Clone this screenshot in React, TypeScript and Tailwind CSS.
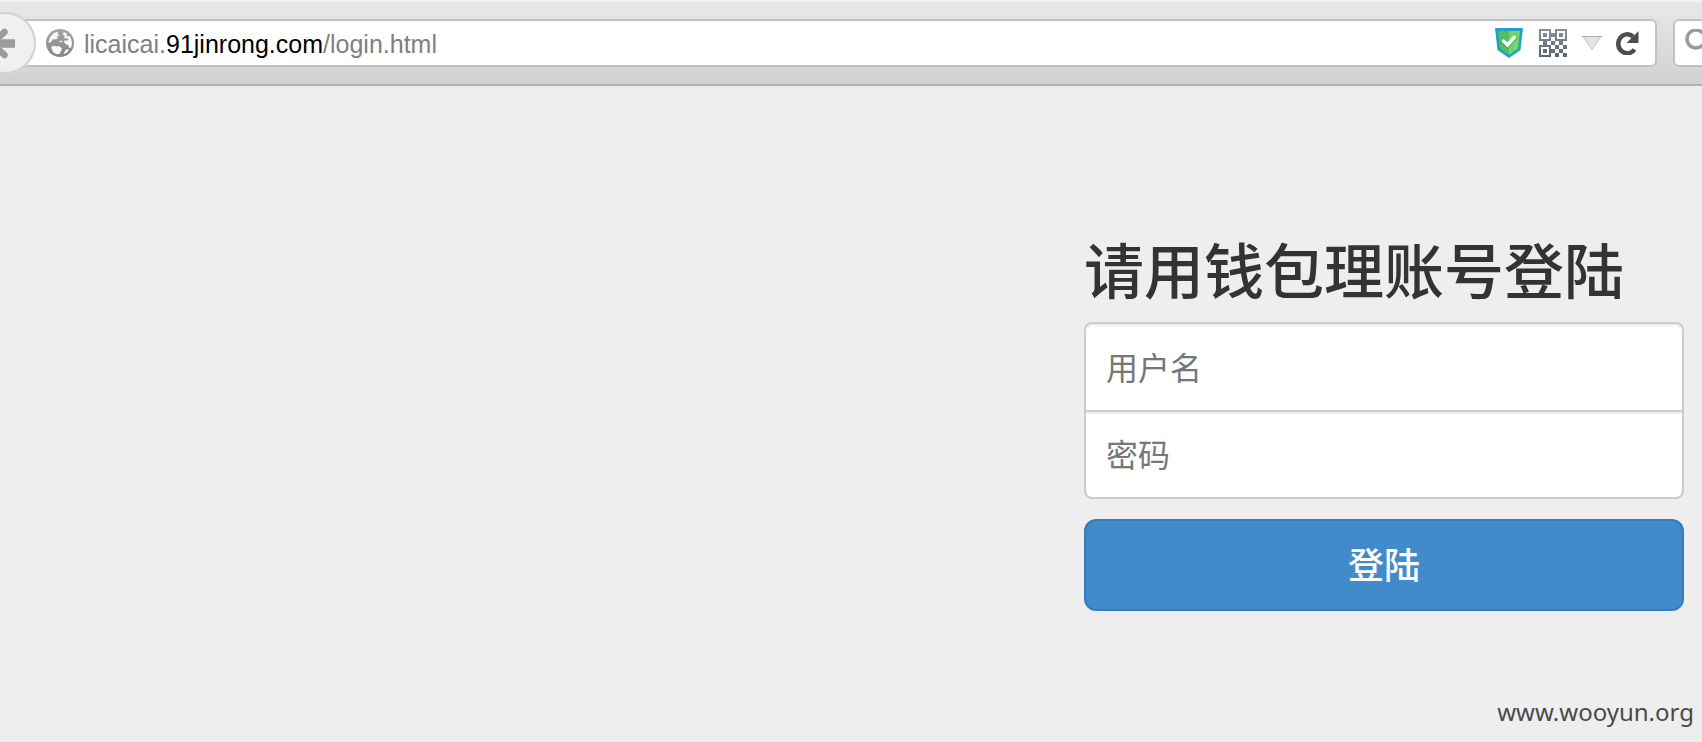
import type { InputHTMLAttributes } from "react";

function BackIcon() {
  return (
    <svg width="62" height="62" viewBox="0 0 62 62" fill="none" stroke="#9b9b9b" aria-hidden="true">
      <path d="M41 31.500H18" strokeWidth="8.500" strokeLinejoin="round" />
      <path d="M30.500 20L18 31.500L30.500 43" strokeWidth="6.500" strokeLinecap="round" />
    </svg>
  );
}

function GlobeIcon() {
  return (
    <svg className="shrink-0" width="28" height="28" viewBox="0 0 28 28" aria-hidden="true">
      <defs>
        <linearGradient id="globe" x1="0" y1="0" x2="0" y2="1">
          <stop offset="0" stopColor="#a4a4a4" />
          <stop offset="1" stopColor="#868686" />
        </linearGradient>
      </defs>
      <circle cx="14" cy="14" r="14" fill="url(#globe)" />
      <g fill="#fafafa">
        <path d="M3 11L5 7L8 4L12 2.500L11.500 5L13.500 6L11 7.500L12 9.500L9 10.500L7 10L5 13L2.500 14Z" />
        <path d="M5 18L8 16.500L10 17.500L13 17L16 19.500L15 22L13.500 25L10 25L7 23Z" />
        <path d="M18 3L21 4.500L20.500 6.500L22.500 7.500L23.500 6.500L25.500 11L26 15L25 18.500L23 19L22.500 16L20 15.500L18 13L19 11L21 12L22.500 10L20 9L17.500 9.500L19 7L16.500 5Z" />
        <path d="M19.500 21L22 20L22.500 22L19.500 24.500L17.500 25Z" />
        <path d="M13.500 12L15.500 11.500L16 13L14 13.500Z" />
      </g>
    </svg>
  );
}

function ShieldIcon() {
  return (
    <svg width="28" height="30" viewBox="0 0 28 30" aria-hidden="true">
      <path d="M0 0H28L25.500 22L14 30L2.500 22Z" fill="#22a0c8" />
      <path d="M3 3H14V27L5 20.500Z" fill="#4fbf61" />
      <path d="M14 3H25L23 20.500L14 27Z" fill="#72d66c" />
      <path d="M8.500 13.500L12.500 17.500L20 9.500" fill="none" stroke="#3f9a4c" strokeWidth="5" strokeLinecap="round" opacity=".5" />
      <path d="M8.500 13L12.500 17L19.500 9" fill="none" stroke="#fff" strokeWidth="3.500" strokeLinecap="round" />
    </svg>
  );
}

const QR_ROWS = [
  "11111100111111",
  "10000100100001",
  "10110111101101",
  "10110111101101",
  "10000100100001",
  "11111100111111",
  "00110011001100",
  "00110011001100",
  "11111100110011",
  "10000100110011",
  "10110111001100",
  "10110111001100",
  "10000100110011",
  "11111100110011",
];

function QrIcon() {
  return (
    <svg width="28" height="28" viewBox="0 0 14 14" shapeRendering="crispEdges" aria-hidden="true">
      <defs>
        <linearGradient id="qr" x1="0" y1="0" x2="0" y2="14" gradientUnits="userSpaceOnUse">
          <stop offset="0" stopColor="#8591a1" />
          <stop offset="1" stopColor="#5b6470" />
        </linearGradient>
      </defs>
      {QR_ROWS.map((row, y) =>
        [...row].map((cell, x) =>
          cell === "1" ? <rect key={`${x}-${y}`} x={x} y={y} width="1" height="1" fill="url(#qr)" /> : null
        )
      )}
    </svg>
  );
}

function DropIcon() {
  return (
    <svg width="20" height="15" viewBox="0 0 20 15" aria-hidden="true">
      <path d="M1 .5H19L10 14Z" fill="#e4e4e4" stroke="#c4c4c4" />
      <path d="M0 .5H20" stroke="#b0b0b0" />
    </svg>
  );
}

function ReloadIcon() {
  return (
    <svg width="24" height="24" viewBox="0 0 24 24" aria-hidden="true">
      <path d="M18.500 18.500A9 9.500 0 1 1 17 5.500" fill="none" stroke="#4d4d4d" strokeWidth="4.500" />
      <path d="M22.500 0V12H10.500Z" fill="#4d4d4d" />
    </svg>
  );
}

function SearchIcon() {
  return (
    <svg className="shrink-0" width="28" height="28" viewBox="0 0 28 28" fill="none" stroke="#9a9a9a" aria-hidden="true">
      <circle cx="11" cy="10" r="9" strokeWidth="3.500" />
      <path d="M17 16L26 25" strokeWidth="5" />
    </svg>
  );
}

function Toolbar() {
  return (
    <header className="flex items-center overflow-hidden border-t-2 border-b-2 border-t-[#f2f2f2] border-b-[#b0b0b0] bg-linear-to-b from-[#e8e8e8] to-[#d1d1d1] pt-[10px] pb-[10px]">
      <button
        type="button"
        aria-label="Back"
        className="relative z-10 -ml-[26px] size-[62px] shrink-0 overflow-hidden rounded-full bg-[#f0f0f0] ring-2 ring-[#d2d2d2] ring-inset"
      >
        <BackIcon />
      </button>
      <div className="-ml-4 flex h-12 min-w-0 flex-1 items-center rounded-r-md border-2 border-[#c1c1c1] bg-white pr-[15px] pl-6">
        <GlobeIcon />
        <div
          role="textbox"
          aria-label="Address"
          contentEditable
          suppressContentEditableWarning
          className="ml-[10px] min-w-0 flex-1 pt-0.5 text-[25px] leading-8 whitespace-nowrap text-[#808080] outline-none"
        >
          licaicai.<span className="text-black">91jinrong.com</span>/login.html
        </div>
        <div className="flex shrink-0 items-center">
          <button type="button" aria-label="Site safety"><ShieldIcon /></button>
          <button type="button" aria-label="QR code" className="ml-4"><QrIcon /></button>
          <button type="button" aria-label="History" className="ml-[15px]"><DropIcon /></button>
          <button type="button" aria-label="Reload" className="ml-[14px]"><ReloadIcon /></button>
        </div>
      </div>
      {/* search box runs past the window edge */}
      <div className="ml-4 w-[29px] shrink-0">
        <label className="flex h-12 w-80 items-center gap-2 rounded-md border-2 border-[#c1c1c1] bg-white pl-[10px]">
          <SearchIcon />
          <input type="search" aria-label="Search" className="min-w-0 flex-1 outline-none" />
        </label>
      </div>
    </header>
  );
}

function Field({ className, ...props }: InputHTMLAttributes<HTMLInputElement>) {
  return (
    <input
      {...props}
      aria-label={props.placeholder}
      className={`block w-full border-2 border-[#ccc] bg-white px-5 text-[32px] text-[#555] shadow-[inset_0_2px_2px_rgba(0,0,0,0.075)] outline-none placeholder:text-[#777] ${className}`}
    />
  );
}

export default function App() {
  return (
    <div className="flex min-h-screen flex-col bg-[#eee] font-['Liberation_Sans','Noto_Sans_CJK_SC',sans-serif]">
      <Toolbar />
      <main className="flex flex-1 justify-end px-[18px] pt-[156px]">
        <form className="w-full max-w-[600px]" onSubmit={(e) => e.preventDefault()}>
          <h1 className="mb-4 text-[60px] leading-[64px] font-medium whitespace-nowrap text-[#333]">请用钱包理账号登陆</h1>
          <Field type="text" placeholder="用户名" className="h-[88px] rounded-t-lg border-b-0 pt-1" />
          <Field type="password" placeholder="密码" className="h-[89px] rounded-b-lg pt-1" />
          <button
            type="submit"
            className="mt-5 block h-[92px] w-full rounded-xl border-2 border-[#357ebd] bg-[#428bca] pt-1 text-[36px] font-medium text-white"
          >
            登陆
          </button>
        </form>
      </main>
      <footer className="px-2 pb-[14px] text-right font-['Noto_Sans',sans-serif] text-[24px] leading-8 text-[#4a4a4a]">
        www.wooyun.org
      </footer>
    </div>
  );
}
